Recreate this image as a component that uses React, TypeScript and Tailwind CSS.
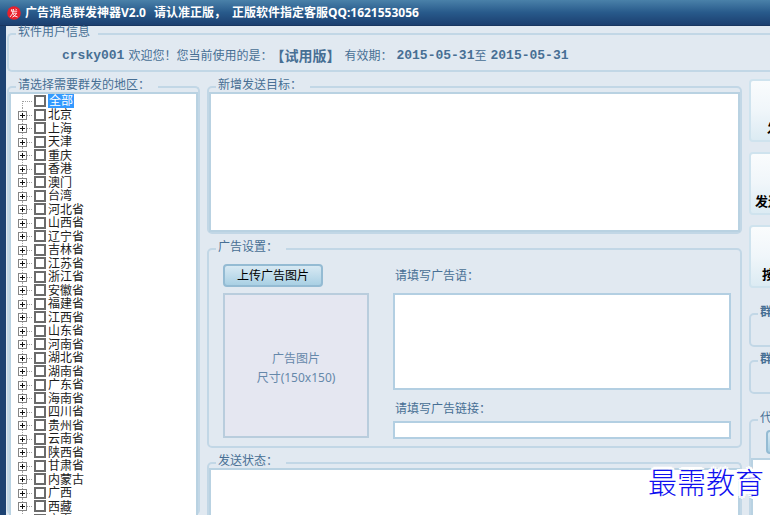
import React, { useState } from 'react';
import clsx from 'clsx';

const REGIONS = [
  '全部', '北京', '上海', '天津', '重庆', '香港', '澳门', '台湾',
  '河北省', '山西省', '辽宁省', '吉林省', '江苏省', '浙江省', '安徽省', '福建省',
  '江西省', '山东省', '河南省', '湖北省', '湖南省', '广东省', '海南省', '四川省',
  '贵州省', '云南省', '陕西省', '甘肃省', '内蒙古', '广西', '西藏', '宁夏',
];

interface GroupProps {
  title: string;
  className?: string;
  bold?: boolean;
  children?: React.ReactNode;
}

// Group box with its caption sitting on the top border
const Group: React.FC<GroupProps> = ({ title, className, bold, children }) => (
  <fieldset className={clsx('min-w-0 border-2 border-[#c2d7e6] rounded-[5px]', className)}>
    <legend className={clsx('ml-[7px] pl-0.5 pr-2 pb-1 leading-3 whitespace-nowrap', bold && 'font-bold')}>
      {title}
    </legend>
    {children}
  </fieldset>
);

const TreeLines: React.FC<{ root?: boolean }> = ({ root }) => (
  <svg width="16" height="14" viewBox="0 0 16 14" fill="none" shapeRendering="crispEdges">
    {root ? (
      <path d="M4.5 7v7M5 7.5h10" stroke="#a0a0a0" strokeDasharray="1 1" />
    ) : (
      <>
        <path d="M4.5 0v14M9 7.5h6" stroke="#a0a0a0" strokeDasharray="1 1" />
        <rect x="0.5" y="3.5" width="8" height="8" fill="#fff" stroke="#848484" />
        <path d="M2 7.5h5M4.5 5v5" stroke="#111" />
      </>
    )}
  </svg>
);

const RegionTree: React.FC = () => {
  const [checked, setChecked] = useState<string[]>([]);

  const toggle = (name: string) => {
    setChecked(prev => (prev.includes(name) ? prev.filter(n => n !== name) : [...prev, name]));
  };

  return (
    <ul className="-mt-[3px] border-2 border-b-0 border-[#b9d2e2] bg-white pl-[7px] text-[#1c1c1c] flex-1">
      {REGIONS.map((name, i) => (
        <li key={name} className="flex items-center odd:h-[14px] even:h-[13px]">
          {i === 0 ? (
            <TreeLines root />
          ) : (
            <button type="button" aria-label={`展开${name}`}>
              <TreeLines />
            </button>
          )}
          <label className="flex items-center">
            <input
              type="checkbox"
              checked={checked.includes(name)}
              onChange={() => toggle(name)}
              className="appearance-none w-3 h-3 border-2 border-[#6b6b6b] bg-white checked:bg-[#3399ff]"
            />
            <span
              className={clsx(
                'block ml-0.5 pr-px',
                i === 0 ? 'h-[14px] leading-[14px] pl-px bg-[#3399ff] text-white' : 'h-[13px] leading-[13px]',
              )}
            >
              {name}
            </span>
          </label>
        </li>
      ))}
    </ul>
  );
};

const SideButton: React.FC<{ label: string; className: string }> = ({ label, className }) => (
  <button
    type="button"
    className={clsx(
      'h-[63px] shrink-0 flex items-end pb-1 rounded border-2 border-[#cfe3ee] bg-linear-to-b from-[#fafcfd] via-[#f0f6fa] to-[#dcebf3] text-[13px] leading-4 font-bold text-black whitespace-nowrap',
      className,
    )}
  >
    {label}
  </button>
);

const App: React.FC = () => {
  const [targets, setTargets] = useState('');
  const [slogan, setSlogan] = useState('');
  const [link, setLink] = useState('');

  return (
    <div className="relative h-screen overflow-hidden flex flex-col bg-[#e1e9f1] text-[12px] text-[#476f94] font-['Noto_Sans','Noto_Sans_CJK_SC',sans-serif]">
      <header className="h-[26px] shrink-0 flex items-center gap-2 pl-[7px] bg-linear-to-b from-[#4a81a9] via-[#285a8b] to-[#1c3f70] border-b border-[#193660] text-white font-bold leading-4 whitespace-nowrap">
        <svg width="14" height="14" viewBox="0 0 14 14" className="-mr-1">
          <circle cx="7" cy="7" r="6.8" fill="#e8202c" />
          <path
            d="M5 3 4.2 5.2h6M8.6 2.8l1 1.2M6.6 3Q6.2 8.500 3 11M5.400 7.200h4.200Q8.400 10 5.400 11.200M5.800 8Q7.600 10.500 10.600 11"
            fill="none"
            stroke="#fff"
            strokeWidth="0.9"
          />
        </svg>
        <h1 className="flex gap-2">
          <span>广告消息群发神器V2.0</span>
          <span>请认准正版，</span>
          <span className="-ml-0.5">正版软件指定客服QQ:1621553056</span>
        </h1>
      </header>

      <div className="flex-1 min-h-0 flex flex-col border-l-[6px] border-[#1d4272] pl-px">
        <Group title="软件用户信息" className="shrink-0 border-r-0 rounded-r-none">
          <div className="flex items-center pl-[53px] pt-1 pb-1 leading-5 whitespace-nowrap">
            <b className="font-['Liberation_Mono',monospace] text-[13px]">crsky001</b>
            <span className="ml-1">欢迎您！您当前使用的是：</span>
            <b className="-ml-0.5 text-[14px]">【试用版】</b>
            <span className="ml-1">有效期：</span>
            <b className="ml-1 font-['Liberation_Mono',monospace] text-[13px]">2015-05-31</b>
            <span className="mr-1">至</span>
            <b className="font-['Liberation_Mono',monospace] text-[13px]">2015-05-31</b>
          </div>
        </Group>

        <div className="flex-1 min-h-0 flex gap-[7px] mt-[7px]">
          <Group title="请选择需要群发的地区：" className="w-[193px] shrink-0 border-b-0">
            <RegionTree />
          </Group>

          <main className="flex-1 min-w-0 flex flex-col gap-[7px]">
            <Group title="新增发送目标：" className="shrink-0">
              <textarea
                aria-label="新增发送目标"
                value={targets}
                onChange={e => setTargets(e.target.value)}
                className="block w-full h-[140px] -mt-[3px] border-2 border-[#b9d2e2] bg-white resize-none outline-none"
              />
            </Group>

            <Group title="广告设置：" className="shrink-0">
              <div className="flex gap-6 pt-[7px] pb-[7px] pl-[14px] pr-[9px]">
                <div className="w-[146px] shrink-0">
                  <button
                    type="button"
                    className="block w-[100px] h-[23px] mb-1.5 rounded border-2 border-[#94bbd3] bg-linear-to-b from-[#d8e9f3] to-[#a9d0e4] text-black leading-4"
                  >
                    上传广告图片
                  </button>
                  <div className="h-[145px] pt-1 flex flex-col items-center justify-center border-2 border-[#b9cddd] bg-[#e5e7f1] text-[#6588aa] leading-[19px]">
                    <span>广告图片</span>
                    <span>尺寸(150x150)</span>
                  </div>
                </div>

                <div className="flex-1 min-w-0">
                  <label htmlFor="slogan" className="block leading-6 mb-[5px] pl-0.5">请填写广告语：</label>
                  <textarea
                    id="slogan"
                    value={slogan}
                    onChange={e => setSlogan(e.target.value)}
                    className="block w-full h-[97px] border-2 border-[#b3cfe2] bg-white resize-none outline-none"
                  />
                  <label htmlFor="link" className="block leading-6 mt-[7px] pl-0.5">请填写广告链接：</label>
                  <input
                    id="link"
                    type="text"
                    value={link}
                    onChange={e => setLink(e.target.value)}
                    className="block w-full h-[18px] border-2 border-[#b3cfe2] bg-white outline-none"
                  />
                </div>
              </div>
            </Group>

            <Group title="发送状态：" className="shrink-0 border-b-0">
              <textarea
                aria-label="发送状态"
                readOnly
                className="block w-full h-24 -mt-[3px] border-2 border-b-0 border-[#b9d2e2] bg-white resize-none outline-none"
              />
            </Group>
          </main>

          <aside className="w-[21px] shrink-0 overflow-hidden">
            <div className="w-24 flex flex-col">
              <div className="flex flex-col gap-[10px]">
                <SideButton label="发" className="pl-4" />
                <SideButton label="发送" className="pl-1" />
                <SideButton label="按" className="pl-[11px]" />
              </div>
              <Group title="群" bold className="mt-[18px] h-[41px]" />
              <Group title="群" bold className="mt-1.5 h-[41px]" />
              <Group title="代" className="mt-[18px]">
                <button
                  type="button"
                  aria-label="代理"
                  className="block w-16 h-6 mt-0.5 ml-[15px] rounded border-2 border-[#94bbd3] bg-linear-to-b from-[#d8e9f3] to-[#a9d0e4]"
                />
                <textarea
                  aria-label="代理列表"
                  className="block w-full h-24 mt-1 border-2 border-[#b9d2e2] bg-white resize-none outline-none"
                />
              </Group>
            </div>
          </aside>
        </div>
      </div>

      <div className="absolute right-1.5 bottom-3 text-[29px] leading-10 font-light text-[#1010f0] [text-shadow:3px_0_#fff,-3px_0_#fff,0_3px_#fff,0_-3px_#fff,2px_2px_#fff,-2px_-2px_#fff,2px_-2px_#fff,-2px_2px_#fff]">
        最需教育
      </div>
    </div>
  );
};

export default App;
